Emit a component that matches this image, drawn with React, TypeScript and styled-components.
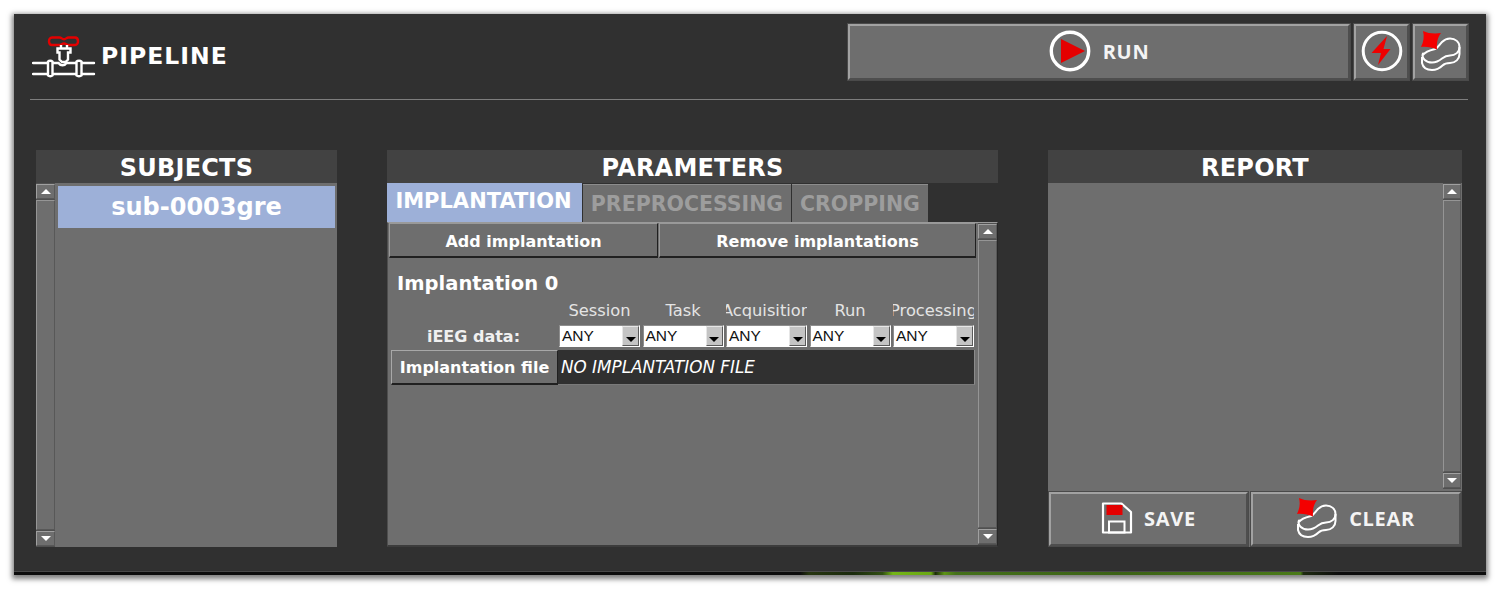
import React from "react";
import styled, { createGlobalStyle } from "styled-components";

const Global = createGlobalStyle`
  html, body { margin: 0; padding: 0; background: #fff; }
  #root { width: 1500px; height: 590px; overflow: hidden; }
`;

const Page = styled.div`
  width: 1500px;
  height: 590px;
  padding: 14px 14px 0;
  box-sizing: border-box;
  font-family: "DejaVu Sans", sans-serif;
`;

const Window = styled.div`
  width: 1472px;
  height: 561px;
  background: #303030;
  display: flex;
  flex-direction: column;
  box-shadow: 0 2px 5px 2px rgba(0, 0, 0, 0.5);
`;

const Header = styled.header`
  height: 56px;
  margin-top: 10px;
  padding: 0 18px;
  display: flex;
  align-items: stretch;
  justify-content: space-between;
`;

const Title = styled.div`
  display: flex;
  align-items: flex-start;
  gap: 5px;
  padding-top: 12px;
`;

const TitleText = styled.span`
  display: block;
  color: #fff;
  font-weight: 700;
  font-size: 23.5px;
  letter-spacing: 1px;
  line-height: 40px;
`;

const Actions = styled.div`
  display: flex;
  gap: 4px;
`;

const Bevel = styled.button<{ $w: number }>`
  width: ${(p) => p.$w}px;
  padding: 0 0 2px;
  margin: 0;
  box-sizing: border-box;
  background: #6e6e6e;
  border: 2px solid;
  border-color: #a2a2a2 #4e4e4e #4e4e4e #a2a2a2;
  box-shadow: 0 0 0 1px #4a4a4a;
  color: #fff;
  display: flex;
  align-items: center;
  justify-content: center;
`;

const ActionLabel = styled.span<{ $gap?: number }>`
  font-family: "Open Sans", sans-serif;
  font-weight: 700;
  font-size: 20px;
  letter-spacing: 0.7px;
  margin-left: ${(p) => p.$gap ?? 12}px;
  color: #f4f4f4;
`;

const Rule = styled.div`
  height: 1px;
  margin: 19px 18px 0 16px;
  background: #7d7d7d;
`;

const Main = styled.main`
  margin-top: 50px;
  padding-left: 22px;
  height: 397px;
  display: grid;
  grid-template-columns: 301px 611px 414px;
  column-gap: 50px;
`;

const Panel = styled.section`
  display: flex;
  flex-direction: column;
  min-height: 0;
`;

const PanelTitle = styled.h2`
  margin: 0;
  height: 33px;
  flex: none;
  background: #424242;
  color: #fff;
  font-size: 24px;
  letter-spacing: 0.2px;
  font-weight: 700;
  line-height: 36px;
  text-align: center;
`;

const SubjectBody = styled.div`
  flex: 1;
  display: flex;
  background: #6e6e6e;
  min-height: 0;
`;

const SubjectList = styled.div`
  flex: 1;
  padding: 3px 2px 0 3px;
`;

const SubjectItem = styled.div`
  height: 42px;
  background: #9db0d8;
  color: #fff;
  font-weight: 700;
  font-size: 24px;
  line-height: 43px;
  text-align: center;
`;

const ScrollTrack = styled.div<{ $w?: number }>`
  width: ${(p) => p.$w ?? 19}px;
  flex: none;
  display: flex;
  flex-direction: column;
  gap: 1px;
  padding: 1px 0;
  box-sizing: border-box;
  background: #505050;
`;

const ScrollButton = styled.div`
  height: 13px;
  flex: none;
  background: #6e6e6e;
  border: 1px solid;
  border-color: #a0a0a0 #585858 #585858 #a0a0a0;
  display: flex;
  align-items: center;
  justify-content: center;
`;

const ScrollThumb = styled.div`
  flex: 1;
  background: #6e6e6e;
  border: 1px solid;
  border-color: #959595 #585858 #585858 #959595;
`;

const Arrow = styled.i<{ $down?: boolean; $color?: string }>`
  display: block;
  width: 0;
  height: 0;
  border-left: 5px solid transparent;
  border-right: 5px solid transparent;
  ${(p) =>
    p.$down
      ? `border-top: 5px solid ${p.$color ?? "#fff"};`
      : `border-bottom: 5px solid ${p.$color ?? "#fff"};`}
`;

const Tabs = styled.div`
  height: 39px;
  flex: none;
  display: flex;
  gap: 1px;
`;

const Tab = styled.div<{ $w: number; $active?: boolean }>`
  width: ${(p) => p.$w}px;
  box-sizing: border-box;
  background: ${(p) => (p.$active ? "#9db0d8" : "#6e6e6e")};
  color: ${(p) => (p.$active ? "#fff" : "#9d9d9d")};
  margin-top: ${(p) => (p.$active ? 0 : 1)}px;
  border-top: ${(p) => (p.$active ? "none" : "1px solid #8c8c8c")};
  padding-right: ${(p) => (p.$active ? 2 : 0)}px;
  font-weight: 700;
  font-size: ${(p) => (p.$active ? 21 : 20.5)}px;
  line-height: ${(p) => (p.$active ? 37 : 38)}px;
  text-align: center;
  white-space: nowrap;
  overflow: hidden;
`;

const TabPane = styled.div`
  flex: 1;
  min-height: 0;
  display: flex;
  background: #6e6e6e;
  border-top: 1px solid #9a9a9a;
  border-left: 1px solid #4e4e4e;
  border-bottom: 2px solid #3c3c3c;
  border-right: 1px solid #262626;
`;

const PaneBody = styled.div`
  flex: 1;
  min-width: 0;
  padding-left: 1px;
`;

const TopButtons = styled.div`
  display: flex;
  height: 35px;
  gap: 1px;
  margin-right: 1px;
`;

const FlatButton = styled.div<{ $w: number }>`
  width: ${(p) => p.$w}px;
  box-sizing: border-box;
  background: #6e6e6e;
  border: 1px solid;
  border-color: #999 #202020 #202020 #999;
  border-bottom-width: 2px;
  color: #fff;
  font-weight: 700;
  font-size: 16px;
  line-height: 35px;
  text-align: center;
`;

const Section = styled.h3`
  margin: 13px 0 0 8px;
  height: 26px;
  color: #fff;
  font-weight: 700;
  font-size: 19.5px;
  line-height: 26px;
`;

const ColumnHeads = styled.div`
  display: grid;
  grid-template-columns: repeat(5, 81px);
  column-gap: 2.5px;
  margin: 3px 0 0 170px;
  height: 25px;
`;

const ColumnHead = styled.div`
  color: #e4e4e4;
  font-size: 16.3px;
  line-height: 22px;
  white-space: nowrap;
  overflow: hidden;
  display: flex;
  justify-content: center;
`;

const DataRow = styled.div`
  display: flex;
  height: 25px;
`;

const RowLabel = styled.div`
  width: 169px;
  margin-right: 1px;
  color: #f0f0f0;
  font-weight: 700;
  font-size: 16px;
  line-height: 24px;
  text-align: center;
`;

const Combos = styled.div`
  display: grid;
  grid-template-columns: repeat(5, 81px);
  column-gap: 2.5px;
  align-content: start;
`;

const Combo = styled.div`
  height: 22px;
  background: #fff;
  border: 1px solid;
  border-color: #8e8e8e #fff #fff #8e8e8e;
  box-sizing: border-box;
  display: flex;
  align-items: center;
  justify-content: space-between;
  color: #111;
  font-family: "Liberation Sans", sans-serif;
  font-size: 15.5px;
  padding-left: 2px;
`;

const ComboButton = styled.div`
  width: 17px;
  height: 20px;
  box-sizing: border-box;
  background: #c4c4c4;
  border: 1px solid;
  border-color: #e6e6e6 #5a5a5a #5a5a5a #e6e6e6;
  display: flex;
  align-items: flex-end;
  justify-content: center;
  padding-bottom: 3px;
`;

const FileRow = styled.div`
  display: flex;
  height: 35px;
  margin-left: 2px;
  margin-right: 3px;
`;

const FileButton = styled.div`
  width: 167px;
  box-sizing: border-box;
  background: #6e6e6e;
  border: 1px solid;
  border-color: #a8a8a8 #202020 #202020 #a8a8a8;
  border-bottom-width: 2px;
  color: #fff;
  font-weight: 700;
  font-size: 16px;
  line-height: 33px;
  text-align: center;
  white-space: nowrap;
`;

const FileField = styled.div`
  flex: 1;
  background: #303030;
  border-right: 1px solid #8a8a8a;
  border-bottom: 1px solid #7a7a7a;
  color: #fff;
  font-style: italic;
  font-size: 16.8px;
  line-height: 35px;
  padding-left: 3px;
  white-space: nowrap;
`;

const ReportBody = styled.div`
  flex: 1;
  display: flex;
  flex-direction: column;
  background: #6e6e6e;
  min-height: 0;
`;

const ReportText = styled.div`
  height: 306px;
  flex: none;
  display: flex;
  justify-content: flex-end;
  padding-right: 1px;
`;

const ReportActions = styled.div`
  flex: 1;
  display: flex;
  gap: 3px;
  padding: 3px 1px 1px;
`;

const Strip = styled.div`
  height: 3px;
  margin-top: auto;
  border-top: 1px solid #484848;
  background: linear-gradient(
    90deg,
    #0c0c0c 0,
    #0c0c0c 53.4%,
    #26350f 54%,
    #1a2a0c 57%,
    #314f12 59%,
    #74b516 59.7%,
    #6aa814 62.3%,
    #1c2c0a 62.6%,
    #5d9414 63.2%,
    #44701a 64%,
    #3c6216 75%,
    #4a7a18 87.4%,
    #1e2a10 87.6%,
    #0c0c0c 90%,
    #0c0c0c 100%
  );
`;

const PipeIcon = () => (
  <svg width="64" height="42" viewBox="0 0 64 42" fill="none">
    <path
      d="M20 1.500h7.500c2 0 2.500 1.800 4.500 1.800s2.500-1.800 4.500-1.800H43c4 0 4 7.500 0 7.500h-6.500c-2 0-2.500-1.500-4.500-1.500S29.500 9 27.500 9H20c-4 0-4-7.500 0-7.500z"
      stroke="#e40000"
      strokeWidth="2.400"
    />
    <g stroke="#fff" strokeWidth="2.400">
      <path d="M29 9v3M35 9v3" />
      <path d="M25.500 12.500h13v4h-2.500v7l-2.500 2.500h-3.500l-2.500-2.500v-7h-2z" />
      <path d="M1 27h14.500M50 27h12M1 38h14.500M50 38h12" strokeLinecap="round" />
      <path d="M16 25.500c1-1 3.500-1 4.500 0v14c-1 1-3.500 1-4.500 0zM44.500 25.500c1-1 4-1 5 0v14c-1 1-4 1-5 0z" />
      <path d="M20.500 27h6c2 3 6 3 8 0h10M20.500 38h24" />
    </g>
  </svg>
);

const RunIcon = () => (
  <svg width="42" height="42" viewBox="0 0 42 42" fill="none">
    <circle cx="21" cy="21" r="18.700" stroke="#fff" strokeWidth="3.400" />
    <path d="M12 9 36 21 12 33z" fill="#e40000" />
  </svg>
);

const BoltIcon = () => (
  <svg width="42" height="42" viewBox="0 0 42 42" fill="none">
    <circle cx="21" cy="21" r="18.800" stroke="#fff" strokeWidth="3" />
    <path d="M26 6 10.500 23h9.500L17 35l12.500-16H22.500z" fill="#ee0000" />
  </svg>
);

const EraserIcon = () => (
  <svg width="40" height="40" viewBox="0 0 40 40" fill="none">
    <g stroke="#fff" strokeWidth="2" strokeLinejoin="round">
      <path d="M2 24C5 20 10 19 14 18c3-1 4-4 7-7 2.500-2.500 5-3.500 8-3.500 5.500 0 9.500 3.500 9.500 8.500 0 5-4 8.500-9.500 8.500-3.500 0-5.500 1-8 3-3 2.500-6 4-10 4-6 0-11-4.500-9-9z" />
      <path d="M1 26v6c1 4.500 5 7 10 7s8-2 10.500-4.500c2-2 4-2.500 7.500-2.500 5.500 0 9.500-4 9.500-9v-7" />
    </g>
    <path d="M2 0C7 2.500 14 3 20 2c-3.500 4.500-4.500 10-4 16.500C11 16.500 6 15.500 0 16 2.500 11 3.500 5.500 2 0z" fill="#f40000" />
  </svg>
);

const SaveIcon = () => (
  <svg width="32" height="32" viewBox="0 0 32 32" fill="none">
    <path d="M2 1.500h18.500l9.500 8.500v20.500H2z" stroke="#fff" strokeWidth="2.200" strokeLinejoin="round" />
    <path d="M8 19.500h15.500v11H8z" stroke="#fff" strokeWidth="2" />
    <path d="M5.500 3h16v10h-16z" fill="#e40000" />
  </svg>
);

const Scrollbar = ({ w }: { w?: number }) => (
  <ScrollTrack $w={w}>
    <ScrollButton>
      <Arrow />
    </ScrollButton>
    <ScrollThumb />
    <ScrollButton>
      <Arrow $down />
    </ScrollButton>
  </ScrollTrack>
);

const columns = ["Session", "Task", "Acquisition", "Run", "Processing"];

export default function App() {
  return (
    <Page>
      <Global />
      <Window>
        <Header>
          <Title>
            <PipeIcon />
            <TitleText>PIPELINE</TitleText>
          </Title>
          <Actions>
            <Bevel $w={502}>
              <RunIcon />
              <ActionLabel>RUN</ActionLabel>
            </Bevel>
            <Bevel $w={55}>
              <BoltIcon />
            </Bevel>
            <Bevel $w={55}>
              <EraserIcon />
            </Bevel>
          </Actions>
        </Header>
        <Rule />
        <Main>
          <Panel>
            <PanelTitle>SUBJECTS</PanelTitle>
            <SubjectBody>
              <Scrollbar />
              <SubjectList>
                <SubjectItem>sub-0003gre</SubjectItem>
              </SubjectList>
            </SubjectBody>
          </Panel>
          <Panel>
            <PanelTitle>PARAMETERS</PanelTitle>
            <Tabs>
              <Tab $w={195} $active>IMPLANTATION</Tab>
              <Tab $w={208}>PREPROCESSING</Tab>
              <Tab $w={136}>CROPPING</Tab>
            </Tabs>
            <TabPane>
              <PaneBody>
                <TopButtons>
                  <FlatButton $w={269}>Add implantation</FlatButton>
                  <FlatButton $w={317}>Remove implantations</FlatButton>
                </TopButtons>
                <Section>Implantation 0</Section>
                <ColumnHeads>
                  {columns.map((c) => (
                    <ColumnHead key={c}>{c}</ColumnHead>
                  ))}
                </ColumnHeads>
                <DataRow>
                  <RowLabel>iEEG data:</RowLabel>
                  <Combos>
                    {columns.map((c) => (
                      <Combo key={c}>
                        ANY
                        <ComboButton>
                          <Arrow $down $color="#000" />
                        </ComboButton>
                      </Combo>
                    ))}
                  </Combos>
                </DataRow>
                <FileRow>
                  <FileButton>Implantation file</FileButton>
                  <FileField>NO IMPLANTATION FILE</FileField>
                </FileRow>
              </PaneBody>
              <Scrollbar />
            </TabPane>
          </Panel>
          <Panel>
            <PanelTitle>REPORT</PanelTitle>
            <ReportBody>
              <ReportText>
                <Scrollbar w={18} />
              </ReportText>
              <ReportActions>
                <Bevel $w={199}>
                  <SaveIcon />
                  <ActionLabel $gap={11}>SAVE</ActionLabel>
                </Bevel>
                <Bevel $w={210}>
                  <EraserIcon />
                  <ActionLabel>CLEAR</ActionLabel>
                </Bevel>
              </ReportActions>
            </ReportBody>
          </Panel>
        </Main>
        <Strip />
      </Window>
    </Page>
  );
}
